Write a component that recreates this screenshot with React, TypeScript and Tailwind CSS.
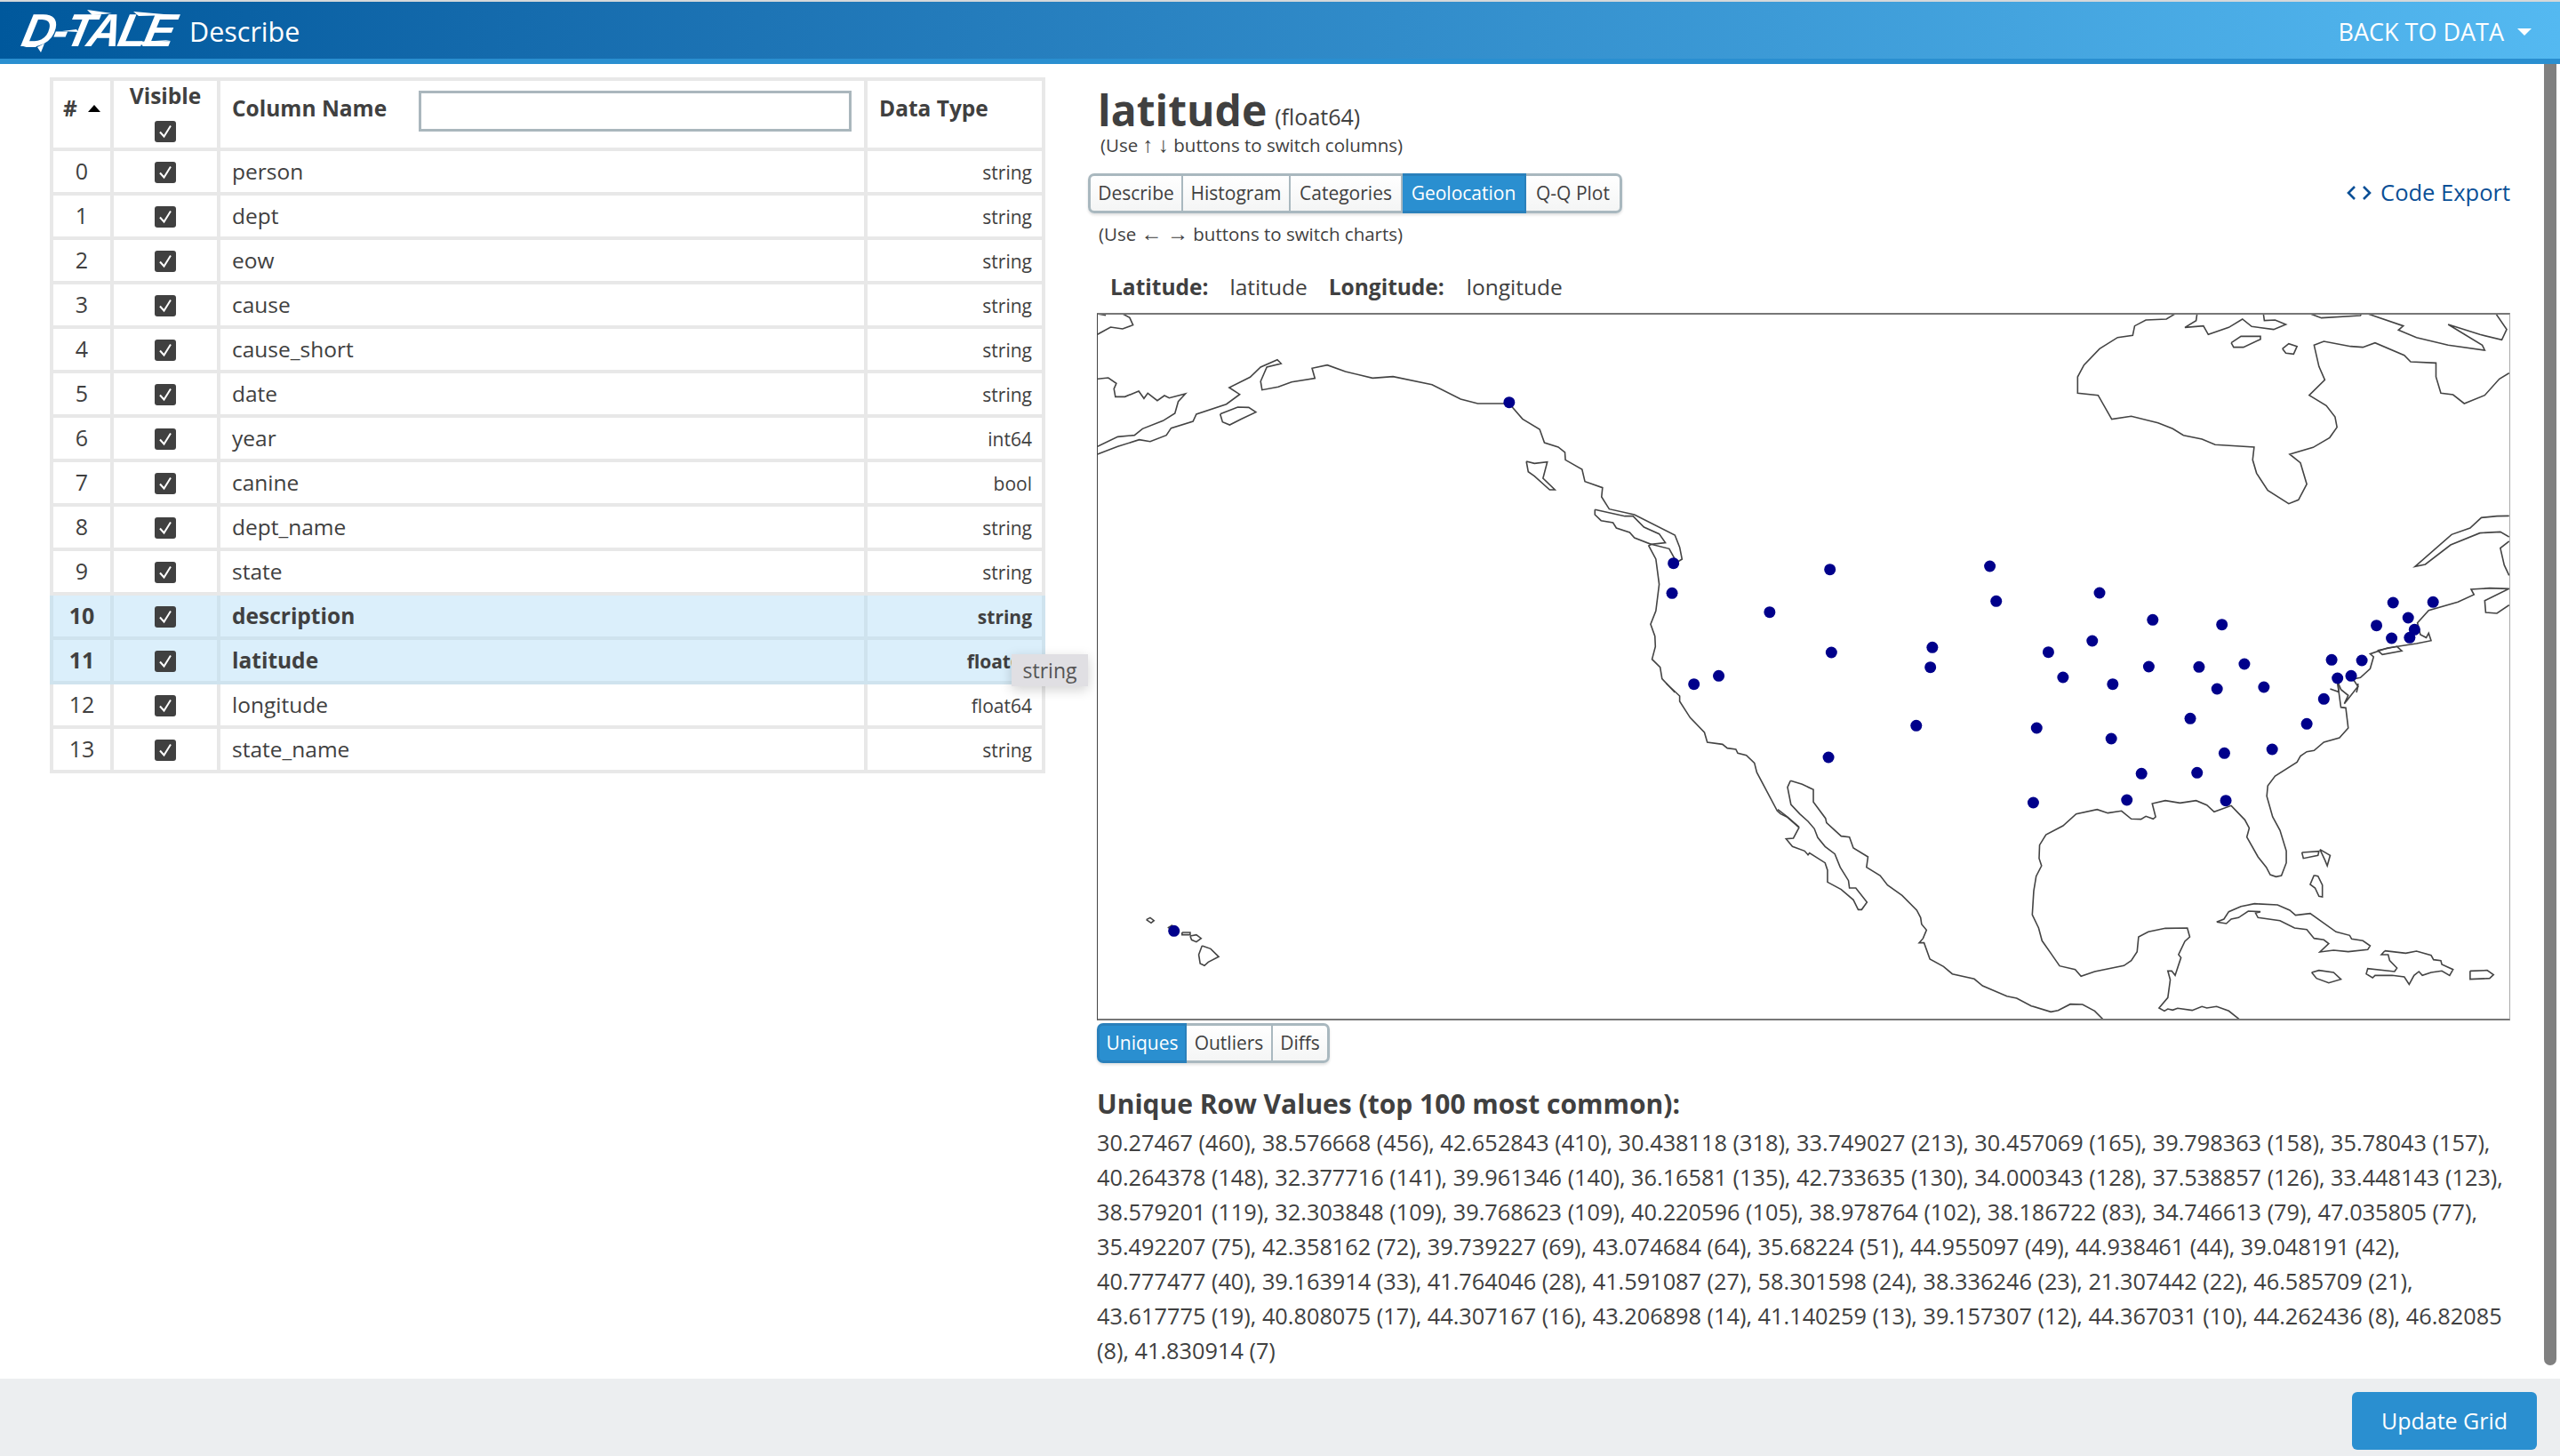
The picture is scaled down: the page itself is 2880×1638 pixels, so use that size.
import React from 'react';

const rows: [string, string][] = [
  ['person', 'string'],
  ['dept', 'string'],
  ['eow', 'string'],
  ['cause', 'string'],
  ['cause_short', 'string'],
  ['date', 'string'],
  ['year', 'int64'],
  ['canine', 'bool'],
  ['dept_name', 'string'],
  ['state', 'string'],
  ['description', 'string'],
  ['latitude', 'float64'],
  ['longitude', 'float64'],
  ['state_name', 'string'],
];

const uniqueLines = [
  '30.27467 (460), 38.576668 (456), 42.652843 (410), 30.438118 (318), 33.749027 (213), 30.457069 (165), 39.798363 (158), 35.78043 (157),',
  '40.264378 (148), 32.377716 (141), 39.961346 (140), 36.16581 (135), 42.733635 (130), 34.000343 (128), 37.538857 (126), 33.448143 (123),',
  '38.579201 (119), 32.303848 (109), 39.768623 (109), 40.220596 (105), 38.978764 (102), 38.186722 (83), 34.746613 (79), 47.035805 (77),',
  '35.492207 (75), 42.358162 (72), 39.739227 (69), 43.074684 (64), 35.68224 (51), 44.955097 (49), 44.938461 (44), 39.048191 (42),',
  '40.777477 (40), 39.163914 (33), 41.764046 (28), 41.591087 (27), 58.301598 (24), 38.336246 (23), 21.307442 (22), 46.585709 (21),',
  '43.617775 (19), 40.808075 (17), 44.307167 (16), 43.206898 (14), 41.140259 (13), 39.157307 (12), 44.367031 (10), 44.262436 (8), 46.82085',
  '(8), 41.830914 (7)',
];

// map outlines, traced in four overlapping tiles of the page
const tiles: { x: number; y: number; sx: number; lines: string[] }[] = [
  {
    x: 1220,
    y: 340,
    sx: 0.5357,
    lines: [
      '27,490 70,457 105,452 122,430 165,403 190,378 197,338 212,312 178,326 168,318 153,335 133,310 125,328 114,303 85,322 65,322 62,295 67,277 50,258 27,262',
      '27,516 70,490 115,467 138,473 172,452 182,428 228,405 235,381 298,347 326,314 304,291 348,256 370,222 405,197 413,210 383,222 370,270 373,299 407,289 435,272 484,260 478,226 510,215 548,237 605,259 648,254 730,281 790,330 826,345 892,345 920,397 956,432 966,477 995,492 1009,510 1010,535 1045,567 1051,608 1088,629 1086,660 1102,701 1155,720 1240,789 1250,830 1255,870 1240,885 1240,870 1228,835 1190,820 1185,825 1200,870 1207,955 1200,1045 1189,1090 1198,1130 1199,1165 1192,1208 1209,1235 1213,1274 1240,1320',
      '285,380 322,357 345,358 360,374 330,397 305,417 290,407 285,380',
      '928,540 945,547 972,542 963,597 988,636 977,636 945,590 932,575 928,540',
      '1072,703 1135,725 1152,725 1175,762 1207,785 1220,815 1190,820 1155,798 1145,780 1117,765 1110,747 1085,740 1072,720 1072,703',
      '27,42 45,47',
      '80,42 95,55 102,80 80,93 55,87 27,112',
    ],
  },
  {
    x: 2000,
    y: 340,
    sx: 0.5485,
    lines: [
      '815,42 797,60 755,63 732,83 728,115 697,122 660,160 628,215 615,255 615,310 657,317 685,398 725,388 780,410 810,430 832,452 870,465 897,484 977,492 974,535 982,580 1005,638 1048,683 1068,670 1085,617 1072,545 1050,516 1098,493 1132,460 1147,425 1143,390 1125,352 1090,317 1122,265 1110,220 1100,148 1120,135 1175,152 1200,155 1225,140 1285,182 1298,204 1350,208 1350,255 1360,310 1385,315 1408,345 1450,317 1480,262 1500,242',
      '930,140 950,118 990,118 990,128 955,155 935,155 930,140',
      '1035,160 1048,143 1065,152 1058,178 1042,175 1035,160',
      '860,42 858,65 835,88 873,83 883,112 925,88 953,60 972,85 1017,95 1042,78 1020,63 998,65 996,42',
      '1092,42 1115,56 1195,48 1197,42',
      '1210,42 1283,83 1273,97 1310,122 1375,148 1450,165 1445,148 1375,78 1440,112 1485,130 1495,95 1473,42',
      '1500,795 1482,778 1440,782 1380,822 1328,888 1307,895 1382,787 1420,765 1443,730 1475,725 1500,724',
      '1500,810 1482,833 1490,890 1500,925',
      '1500,1025 1475,1053 1452,1050 1450,1010 1500,970 1460,968 1422,972 1428,990 1395,1015 1335,1043 1312,1085 1318,1125 1330,1135 1335,1120 1340,1145 1310,1155 1250,1170 1215,1190 1222,1200 1215,1240 1195,1270 1180,1275 1190,1300 1187,1320',
      '1230,1178 1270,1165 1280,1180 1240,1192 1230,1178',
      '1133,1308 1150,1318 1150,1290',
    ],
  },
  {
    x: 1220,
    y: 770,
    sx: 0.5357,
    lines: [
      '1222,0 1250,42 1250,60 1272,115 1302,165 1308,198 1340,205 1350,218 1368,222 1372,235 1390,242 1407,268 1412,300 1455,430 1462,440 1475,450 1500,485',
      '130,797 138,790 146,800 140,808 130,797',
      '205,840 222,840 222,848 205,848 205,840',
      '222,852 235,848 245,860 235,872 225,865 222,852',
      '247,885 265,895 282,922 260,940 252,952 243,945 240,915 247,885',
      '175,825 185,815',
    ],
  },
  {
    x: 2000,
    y: 770,
    sx: 0.5485,
    lines: [
      '44,485 20,450 0,425',
      '26,328 20,350 27,408 45,440 62,465 75,490 82,520 97,550 117,575 128,620 145,665 147,690 160,690 183,738 172,763 165,763 155,730 130,695 102,670 102,630 97,605 65,572 62,578 55,565 30,550 17,524 32,522 44,485',
      '26,328 50,340 73,358 73,400 98,455 100,470 130,515 147,518 155,555 185,585 182,620 210,648 225,680 255,715 285,765 293,790 295,812 305,832 298,860 290,875 300,875 312,930 340,955 358,980 403,997 420,1020 470,1055 490,1062 520,1088 560,1108 575,1103 600,1082 625,1083 650,1105 668,1135',
      '948,1135 925,1105 900,1090 880,1095 870,1090 850,1103 820,1096 810,1102 800,1098 793,1105 782,1095 800,1060 805,1000 800,970 808,970 815,985 827,925 822,915 835,870 845,855 840,825 795,826 760,838 740,855 737,905 725,935 710,952 650,972 622,988 610,965 578,953 560,910 542,868 535,825 522,780 525,700 530,650 541,615 536,590 537,545 550,510 585,480 612,440 655,425 677,437 705,430 725,457 745,458 755,448 770,457 775,450 768,405 795,395 825,403 858,395 880,410 895,433 930,412 958,460 967,488 962,518 985,585 1002,620 1010,645 1022,652 1033,648 1043,605 1043,565 1030,495 1015,450 1003,380 1005,345 1020,312 1065,265 1072,245 1085,230 1100,226 1120,198 1152,183 1170,150 1165,82 1155,80 1150,20 1148,0',
      '1190,0 1190,10 1162,68 1170,40 1155,20 1150,0',
      '1075,570 1110,566 1108,580 1078,590 1075,570',
      '1112,560 1133,580 1127,615 1122,595 1112,560',
      '1100,647 1108,650 1117,680 1117,720 1110,718 1102,690 1092,678 1100,647',
      '900,805 915,795 925,770 950,752 978,743 1025,747 1050,765 1062,782 1092,776 1145,838 1173,850 1177,862 1200,868 1215,885 1210,898 1170,905 1140,900 1112,906 1130,878 1120,865 1100,860 1085,830 1060,825 1030,800 985,790 980,775 990,770 965,768 945,790 930,795 920,810 900,805',
      '1095,975 1110,968 1140,975 1155,998 1130,1010 1105,995 1095,975',
      '1245,902 1288,910 1310,903 1340,917 1345,932 1360,935 1362,948 1385,965 1378,985 1362,970 1340,975 1322,985 1315,972 1305,985 1295,1015 1285,990 1260,985 1225,985 1220,993 1207,980 1210,962 1265,972 1270,960 1255,935 1252,915 1238,915 1245,902',
      '1420,970 1455,968 1468,983 1460,995 1420,998 1420,970',
    ],
  },
];

const dots: [number, number, number[][]][] = [
  [1220, 340, [[892, 341], [1237, 884], [1234, 985], [1439, 1049], [1280, 1292], [1332, 1264]]],
  [1220, 770, [[188, 835]]],
  [2000, 340, [[107, 905], [435, 894], [448, 1012], [660, 984], [769, 1075], [911, 1091], [1262, 1017], [1344, 1015], [1293, 1068], [1228, 1094], [1306, 1108], [1259, 1137], [1296, 1135], [645, 1146], [110, 1185], [317, 1168], [313, 1235], [555, 1184], [761, 1233], [864, 1234], [957, 1224], [1136, 1210], [1198, 1212], [1148, 1272], [1176, 1264], [585, 1269], [687, 1292], [901, 1308], [997, 1302]]],
  [2000, 770, [[1120, 52], [846, 118], [1085, 136], [284, 142], [531, 150], [684, 186], [104, 249], [916, 235], [1014, 222], [746, 304], [860, 301], [524, 402], [716, 393], [919, 395]]],
];

function CheckBox() {
  return (
    <span className="inline-flex w-[24px] h-[24px] rounded-[3px] bg-[#404040] items-center justify-center align-middle">
      <svg width="18" height="18" viewBox="0 0 18 18" fill="none" stroke="#fff" strokeWidth="2">
        <path d="M3 9.5 L7.5 14.5 L15 2.5" />
      </svg>
    </span>
  );
}

function ButtonGroup({ items, active, widths }: { items: string[]; active: string; widths: string[] }) {
  return (
    <div className="flex h-[45px] rounded-[7px] shadow-[0_2px_3px_rgba(0,0,0,0.12)]">
      {items.map((label, i) => {
        const on = label === active;
        return (
          <div
            key={label}
            className={`${widths[i]} flex items-center justify-center text-[21px] border-y-[3px] ${i === 0 ? 'border-l-[3px] rounded-l-[7px]' : ''} ${i === items.length - 1 ? 'border-r-[3px] rounded-r-[7px]' : 'border-r-[2px]'} ${
              on ? 'bg-[#2a8fd0] border-[#2a80bb] text-white' : 'bg-gradient-to-b from-white to-[#f4f5f5] border-[#a9b8bf] text-[#404040]'
            }`}
          >
            {label}
          </div>
        );
      })}
    </div>
  );
}

function Arrow({ glyph }: { glyph: string }) {
  return <span className="font-['Liberation_Sans',sans-serif] text-[24px]">{glyph}</span>;
}

function Logo() {
  return (
    <span className="relative w-[172px] h-[50px] flex items-center">
      <span className="text-[52px] leading-none font-black italic tracking-[-3px] font-['Liberation_Sans',sans-serif] -skew-x-12">D-TALE</span>
      {/* brush streaks around the lettering */}
      <svg width="176" height="50" viewBox="0 0 176 50" fill="#fff" className="absolute left-0 top-0">
        <path d="M0 44 L22 38 L14 44 Z M16 44 L20 50 L24 40 Z M72 2 L100 6 L78 8 Z M124 4 L170 8 L130 9 Z M130 38 L166 36 L134 42 Z M60 24 L44 26 L62 27 Z" />
      </svg>
    </span>
  );
}

function GeoMap() {
  return (
    <svg width="1588" height="792" viewBox="1235 355 1588 792" className="block" fill="none">
      {tiles.map((tile) => (
        <g key={`${tile.x}-${tile.y}`} transform={`translate(${tile.x} ${tile.y}) scale(${tile.sx} 0.33333)`}>
          {tile.lines.map((pts) => (
            <polyline key={pts} points={pts} stroke="#444" strokeWidth="1.6" vectorEffect="non-scaling-stroke" />
          ))}
        </g>
      ))}
      {dots.map(([x, y, list]) =>
        list.map(([u, v]) => (
          <circle key={`${x}-${y}-${u}-${v}`} cx={x + u * (x === 1220 ? 0.5357 : 0.5485)} cy={y + v / 3} r="6.5" fill="#00008b" />
        )),
      )}
    </svg>
  );
}

export default function App() {
  return (
    <div className="w-[2880px] h-[1638px] flex flex-col overflow-hidden bg-white text-[#404040] font-['Open_Sans',sans-serif]">
      {/* Header */}
      <div className="h-[72px] shrink-0 border-t-2 border-t-[#d5d8da] border-b-[6px] border-b-[#2a8fd0] bg-gradient-to-r from-[#00589c] to-[#54b9f1] flex items-center justify-between text-white">
        <div className="flex items-center pl-[26px]">
          <Logo />
          <span className="ml-[15px] text-[30.5px] mt-[4px]">Describe</span>
        </div>
        <div className="flex items-center pr-[32px] text-[27px] mt-[4px]">
          <span>BACK TO DATA</span>
          <span className="ml-[15px] w-0 h-0 border-x-[8px] border-x-transparent border-t-[8px] border-t-white" />
        </div>
      </div>

      {/* Body */}
      <div className="flex-1 flex min-h-0 relative">
        <div className="w-[1224px] shrink-0 pl-[56px] pt-[15px]">
          <div className="relative w-[1116px]">
            <table className="w-[1116px] table-fixed border-collapse">
              <colgroup>
                <col className="w-[68px]" />
                <col className="w-[120px]" />
                <col className="w-[728px]" />
                <col className="w-[200px]" />
              </colgroup>
              <thead>
                <tr className="h-[79px]">
                  <th className="border-[4px] border-[#e8e8e8] text-[24.5px] align-top pt-[13px] leading-[36px]">
                    <span className="inline-flex items-center gap-[12px]">
                      # <span className="w-0 h-0 border-x-[7px] border-x-transparent border-b-[8px] border-b-black" />
                    </span>
                  </th>
                  <th className="border-[4px] border-[#e8e8e8] text-[24.5px] align-top">
                    <div className="leading-[34px]">Visible</div>
                    <div className="h-[28px] mt-[9px] leading-none"><CheckBox /></div>
                  </th>
                  <th className="border-[4px] border-[#e8e8e8] text-[24.5px] text-left pl-[13px] align-top pt-[11px]">
                    <div className="flex items-start">
                      <span className="w-[210px] leading-[36px] mt-[2px]">Column Name</span>
                      <input className="w-[487px] h-[46px] border-[3px] border-[#aab7bd] outline-none bg-white" />
                    </div>
                  </th>
                  <th className="border-[4px] border-[#e8e8e8] text-[24.5px] text-left pl-[13px] align-top pt-[13px] leading-[36px]">Data Type</th>
                </tr>
              </thead>
              <tbody>
                {rows.map(([name, type], i) => {
                  const sel = i === 10 || i === 11;
                  const cell = sel ? 'border-[4px] border-[#cfe3ee] bg-[#dbeffb]' : 'border-[4px] border-[#e8e8e8]';
                  return (
                    <tr key={name} className={`h-[50px] ${sel ? 'font-bold' : ''}`}>
                      <td className={`${cell} text-center text-[25px]`}>{i}</td>
                      <td className={`${cell} text-center`}><CheckBox /></td>
                      <td className={`${cell} pl-[13px] text-[24.5px]`}>{name}</td>
                      <td className={`${cell} text-right pr-[11px] pt-[3px] text-[21px]`}>{type}</td>
                    </tr>
                  );
                })}
              </tbody>
            </table>
            <div className="absolute left-[1082px] top-[649px] w-[86px] h-[36px] bg-[#e0dfe3] flex items-center justify-center text-[23px] text-[#555] font-normal shadow-[0_4px_14px_rgba(0,0,0,0.18)]">
              string
            </div>
          </div>
        </div>

        <div className="w-[1638px] shrink-0 relative">
          <div className="pl-[11px] pt-[28px] flex items-end leading-none">
            <span className="text-[48px] font-bold">latitude</span>
            <span className="ml-[9px] text-[25px] mb-[4px]">(float64)</span>
          </div>
          <div className="pl-[14px] text-[20.5px] leading-[26px] mt-[2px]">
            (Use <Arrow glyph="↑" /> <Arrow glyph="↓" /> buttons to switch columns)
          </div>
          <div className="flex items-center justify-between mt-[19px] pr-[38px]">
            <ButtonGroup
              items={['Describe', 'Histogram', 'Categories', 'Geolocation', 'Q-Q Plot']}
              active="Geolocation"
              widths={['w-[107px]', 'w-[121px]', 'w-[126px]', 'w-[139px]', 'w-[108px]']}
            />
            <div className="flex items-center text-[#0a4f96] text-[25.5px] -mt-[2px]">
              <svg width="28" height="18" viewBox="0 0 28 18" fill="none" stroke="#0a4f96" strokeWidth="2.6" className="mr-[10px]">
                <path d="M9 2 L2 9 L9 16 M19 2 L26 9 L19 16" />
              </svg>
              Code Export
            </div>
          </div>
          <div className="pl-[12px] text-[20.5px] leading-[26px] mt-[10px]">
            (Use <Arrow glyph="←" /> <Arrow glyph="→" /> buttons to switch charts)
          </div>
          <div className="pl-[25px] mt-[29px] text-[24.5px] leading-[36px] flex">
            <b className="mr-[24px]">Latitude:</b>
            <span className="mr-[24px]">latitude</span>
            <b className="mr-[25px]">Longitude:</b>
            <span>longitude</span>
          </div>

          <div className="ml-[10px] w-[1590px] mt-[11px]">
            <div className="border-y-2 border-y-[#777] border-l border-l-[#444] border-r border-r-[#aaa]">
              <GeoMap />
            </div>
            <div className="mt-[3px]">
              <div className="inline-block">
                <ButtonGroup items={['Uniques', 'Outliers', 'Diffs']} active="Uniques" widths={['w-[101px]', 'w-[97px]', 'w-[64px]']} />
              </div>
            </div>
            <div className="mt-[28px] text-[30px] font-bold leading-[36px]">Unique Row Values (top 100 most common):</div>
            <div className="mt-[6px] text-[25.3px] leading-[39px]">
              {uniqueLines.map((line) => (
                <div key={line} className="whitespace-nowrap">{line}</div>
              ))}
            </div>
          </div>
        </div>

        <div className="w-[14px] h-[1464px] rounded-b-[7px] bg-[#808080] shrink-0" />
      </div>

      {/* Footer */}
      <div className="h-[87px] shrink-0 bg-[#eceef0] flex items-center justify-end pr-[26px]">
        <button className="w-[208px] h-[65px] rounded-[6px] bg-[#2a8fd0] text-white text-[25px] mt-[8px]">Update Grid</button>
      </div>
    </div>
  );
}
